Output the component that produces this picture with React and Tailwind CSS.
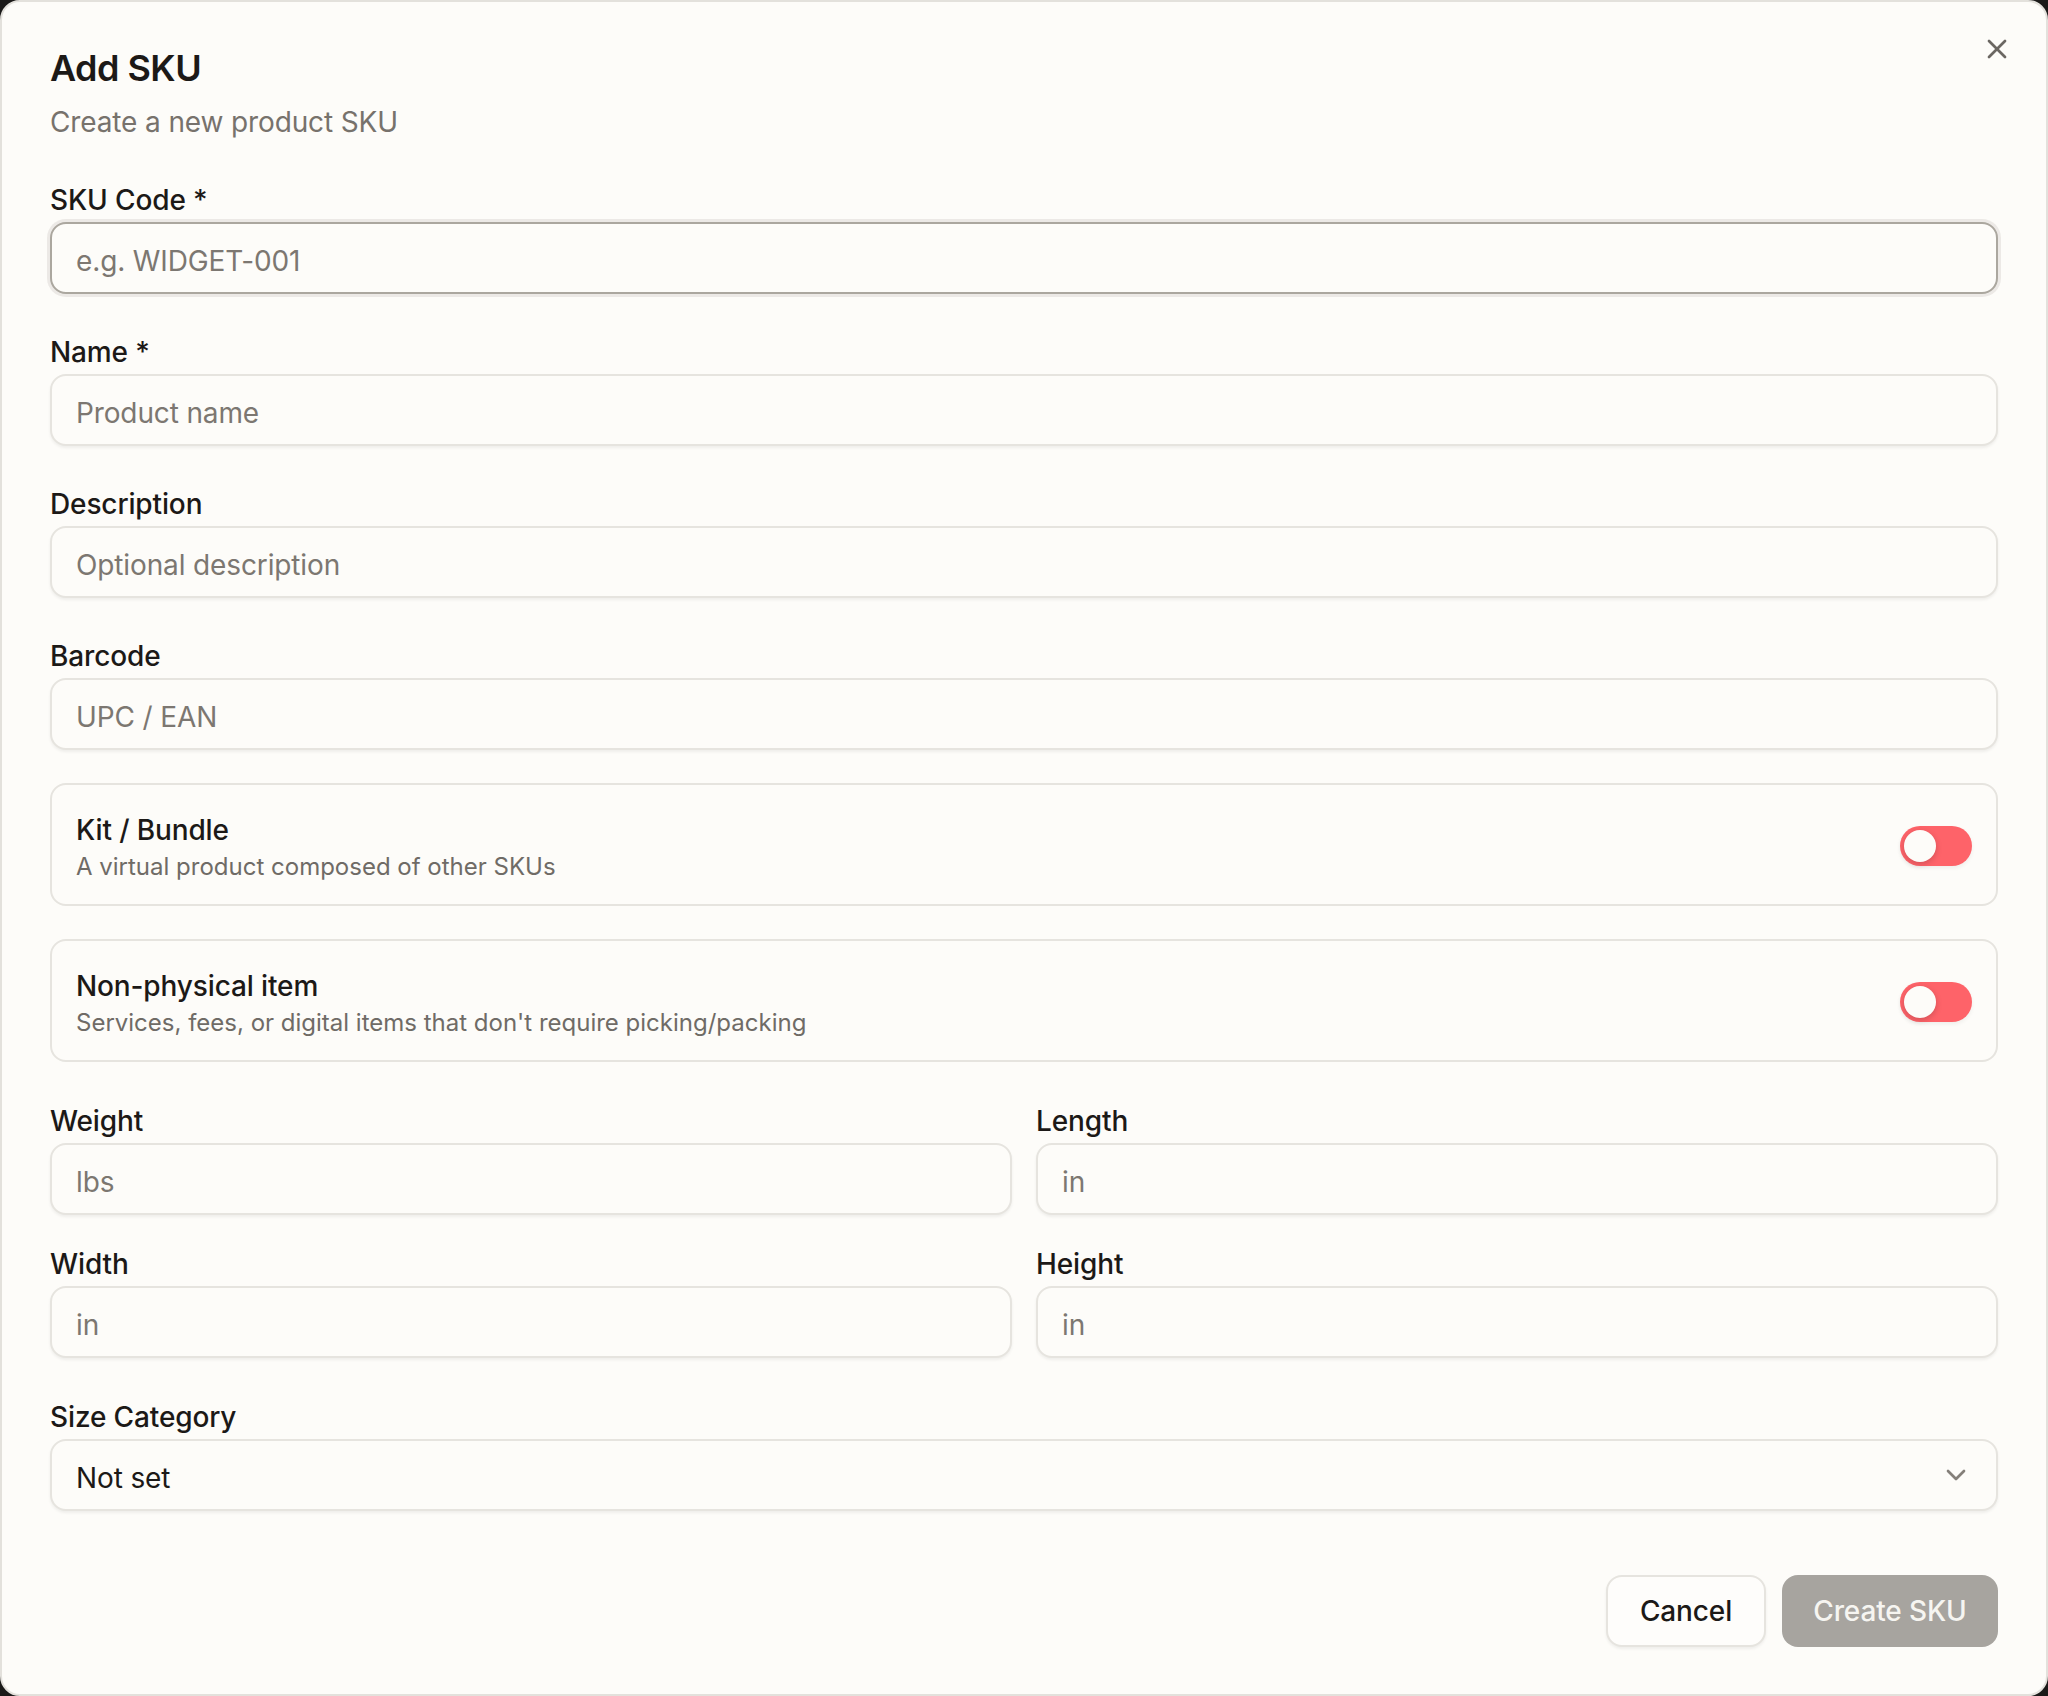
import { ChevronDown, X } from "lucide-react";

const inputBase =
  "h-[72px] w-full rounded-[16px] border-2 bg-[#fdfcf9] px-[24px] pt-[5px] text-[28px] text-[#1c1917] outline-none placeholder:text-[#7c7771]";
const inputIdle = "border-[#e6e4df] shadow-[0_2px_3px_rgba(0,0,0,0.06)]";

function Field({ label, placeholder, focused, className = "" }) {
  return (
    <div className={`flex flex-col ${className}`}>
      <label className="text-[28px] font-medium leading-[28px] text-[#1c1917]">
        {label}
      </label>
      <input
        placeholder={placeholder}
        className={`mt-[8px] ${inputBase} ${
          focused
            ? "border-[#aba79f] shadow-[0_0_0_3px_rgba(214,211,206,0.45)]"
            : inputIdle
        }`}
      />
    </div>
  );
}

function ToggleCard({ title, description, className = "" }) {
  return (
    <div
      className={`flex items-center justify-between rounded-[16px] border-2 border-[#e6e4df] px-[24px] pb-[23px] pt-[25px] ${className}`}
    >
      <div className="flex flex-col">
        <span className="text-[28px] font-medium leading-[40px] text-[#1c1917]">
          {title}
        </span>
        <span className="mt-[3px] text-[24px] leading-[28px] tracking-normal text-[#6f6b66]">
          {description}
        </span>
      </div>
      <button className="flex h-[40px] w-[72px] items-center rounded-full bg-[#fe6369] px-[4px] shadow-[0_2px_4px_rgba(0,0,0,0.06)]">
        <span className="h-[32px] w-[32px] rounded-full bg-[#fdfcf9] shadow-[0_2px_6px_rgba(0,0,0,0.18)]" />
      </button>
    </div>
  );
}

export default function App() {
  return (
    <div
      className="h-[1696px] w-[2048px] overflow-hidden bg-[#1b1a19] tracking-[-0.008em]"
      style={{ fontFamily: "Inter, 'Noto Sans', sans-serif" }}
    >
      <div className="relative flex h-full w-full flex-col rounded-[20px] border-2 border-[#e3e1dc] bg-[#fdfcf9] px-[48px] pt-[48px]">
        <button className="absolute right-[33px] top-[31px] text-[#6b6762]">
          <X size={32} strokeWidth={2} />
        </button>

        <h1 className="text-[36px] font-semibold leading-[36px] tracking-[-0.015em] text-[#1c1917]">
          Add SKU
        </h1>
        <p className="mt-[16px] text-[28px] leading-[40px] text-[#77726c]">
          Create a new product SKU
        </p>

        <Field
          className="mt-[44px]"
          label="SKU Code *"
          placeholder="e.g. WIDGET-001"
          focused
        />
        <Field className="mt-[44px]" label="Name *" placeholder="Product name" />
        <Field
          className="mt-[44px]"
          label="Description"
          placeholder="Optional description"
        />
        <Field className="mt-[44px]" label="Barcode" placeholder="UPC / EAN" />

        <ToggleCard
          className="mt-[33px]"
          title="Kit / Bundle"
          description="A virtual product composed of other SKUs"
        />
        <ToggleCard
          className="mt-[33px]"
          title="Non-physical item"
          description="Services, fees, or digital items that don't require picking/packing"
        />

        <div className="mt-[45px] grid grid-cols-2 gap-x-[24px] gap-y-[35px]">
          <Field label="Weight" placeholder="lbs" />
          <Field label="Length" placeholder="in" />
          <Field label="Width" placeholder="in" />
          <Field label="Height" placeholder="in" />
        </div>

        <div className="mt-[45px] flex flex-col">
          <label className="text-[28px] font-medium leading-[28px] text-[#1c1917]">
            Size Category
          </label>
          <button
            className={`mt-[8px] flex items-center justify-between ${inputBase} ${inputIdle}`}
          >
            <span>Not set</span>
            <ChevronDown size={32} strokeWidth={2} className="-mt-[5px] text-[#77726c] opacity-90" />
          </button>
        </div>

        <div className="mt-[64px] flex justify-end gap-[16px]">
          <button className="h-[72px] w-[160px] rounded-[16px] border-2 border-[#e6e4df] bg-[#fefdfb] text-[28px] font-medium text-[#1c1917] shadow-[0_2px_3px_rgba(0,0,0,0.06)]">
            Cancel
          </button>
          <button className="h-[72px] w-[216px] rounded-[16px] bg-[#a7a49f] text-[28px] font-medium text-[#f6f5f1]">
            Create SKU
          </button>
        </div>
      </div>
    </div>
  );
}
